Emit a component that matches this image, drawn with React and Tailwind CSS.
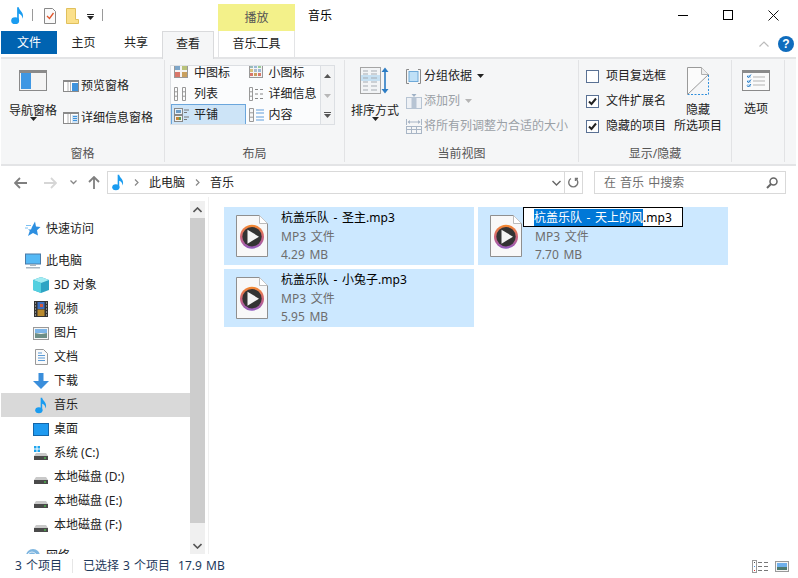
import React from 'react';

const Note = ({ className }) => (
    <svg viewBox="0 0 14 20" className={className}>
        <ellipse cx="4.5" cy="15.6" rx="4.3" ry="3.6" fill="#1a9cf0" />
        <path d="M6.6 1h1.8c.3 3 4.6 5 4.6 9.6 0 1-.2 2-.6 2.8.1-3-2.300-5-4-5.600V16H6.600z" fill="#1a9cf0" />
    </svg>
);

const Caret = ({ color = '#222', className = '' }) => (
    <svg viewBox="0 0 7 4" className={`w-[7px] h-[4px] ${className}`}>
        <path d="M0 0h7L3.500 4z" fill={color} />
    </svg>
);

const PaneIcon = ({ detail }) => (
    <svg viewBox="0 0 16 12" className="w-[16px] h-[12px]">
        <rect x=".5" y=".5" width="15" height="11" fill="#fff" stroke="#8a8a8a" />
        <rect x="1" y="1" width="14" height="1" fill="#8a8a8a" />
        <path d="M5 2v9M7.500 2v9" stroke="#b5b5b5" />
        <rect x="9" y="3" width="6" height="8" fill={detail ? '#cfe3f5' : '#3f93dc'} />
        {detail && <path d="M10 4.500h4M10 6.500h4M10 8.500h4" stroke="#3f93dc" />}
    </svg>
);

const NavPaneIcon = () => (
    <svg viewBox="0 0 28 21" className="w-[28px] h-[21px]">
        <rect x=".5" y=".5" width="27" height="20" fill="#f4f4f4" stroke="#8a8a8a" />
        <rect x="1" y="1" width="26" height="2" fill="#8a8a8a" />
        <rect x="2" y="3" width="10" height="16" fill="#3f97e3" />
    </svg>
);

const SortIcon = () => (
    <svg viewBox="0 0 30 27" className="w-[30px] h-[27px]">
        <rect x=".5" y=".5" width="20" height="26" fill="#f2f4f6" stroke="#a5a5a5" />
        <rect x="1" y="8" width="19" height="6" fill="#c6e0f2" />
        <path d="M3 4h5M11 4h6M3 7h5M11 7h6M3 11h5M11 11h6M3 15h5M11 15h6M3 19h5M11 19h6M3 23h5M11 23h6" stroke="#a5abb2" />
        <path d="M25 2v23" stroke="#2b7cc4" strokeWidth="1.600" />
        <path d="M21.500 5L25 .5 28.500 5zM21.500 22L25 26.500 28.500 22z" fill="#2b7cc4" />
    </svg>
);

const GroupIcon = () => (
    <svg viewBox="0 0 15 15" className="w-[15px] h-[15px]">
        <path d="M3 .5H.5v14H3M12 .5h2.500v14H12" fill="none" stroke="#8a8a8a" />
        <rect x="3" y="2.500" width="9" height="10" fill="#bfe0f7" stroke="#6ea9d8" />
    </svg>
);

const AddColIcon = () => (
    <svg viewBox="0 0 16 15" className="w-[16px] h-[15px]">
        <rect x=".5" y="3.500" width="15" height="11" fill="#eef1f5" stroke="#b7c4d3" />
        <rect x="5.500" y="3" width="5" height="12" fill="#b7c4d3" />
        <path d="M5.500 0h5L8 3z" fill="#9fb1c5" />
    </svg>
);

const FitIcon = () => (
    <svg viewBox="0 0 16 15" className="w-[16px] h-[15px]">
        <path d="M.5 0v6M15.500 0v6M2 3h12" stroke="#a9b6c6" />
        <path d="M4 1L1.500 3 4 5zM12 1l2.500 2L12 5z" fill="#a9b6c6" />
        <rect x=".5" y="7.500" width="15" height="7" fill="none" stroke="#a9b6c6" />
        <path d="M.5 10.500h15M5.500 8v7M10.500 8v7" stroke="#a9b6c6" />
    </svg>
);

const HideIcon = () => (
    <svg viewBox="0 0 22 28" className="w-[22px] h-[28px]">
        <path d="M.5 27.500V.5h14l7 7" fill="#fbfbfb" />
        <path d="M.5 27.500V.5h14l7 7" fill="none" stroke="#9a9a9a" />
        <path d="M14.500.5v7h7" fill="#eee" stroke="#b0b0b0" />
        <path d="M.5 27.500l21-20" stroke="#9a9a9a" />
        <path d="M21.500 8v19.500H1" fill="none" stroke="#2f8fdc" strokeDasharray="2 1.500" />
    </svg>
);

const OptionsIcon = () => (
    <svg viewBox="0 0 28 21" className="w-[28px] h-[21px]">
        <rect x=".5" y=".5" width="27" height="20" fill="#fafafa" stroke="#8a8a8a" />
        <rect x="1" y="1" width="26" height="2" fill="#8a8a8a" />
        <path d="M11 7h12M11 11h12M11 15h12" stroke="#b3b3b3" />
        <rect x="5" y="5" width="4" height="3" fill="#bcd9f2" />
        <rect x="5" y="10" width="4" height="3" fill="#bcd9f2" />
        <rect x="5" y="14" width="4" height="3" fill="#bcd9f2" />
        <path d="M5 6l1.500 1.500L9 4.500M5 11l1.500 1.500L9 9.500M5 15.500L6.500 17 9 14" fill="none" stroke="#2b7cc4" />
    </svg>
);

const GalleryIcon = ({ type }) => {
    if (type === 'medium' || type === 'small') {
        const cells = type === 'medium'
            ? [[1, 1, 5, '#7ea6c9'], [8, 1, 5, '#b9c27a'], [1, 8, 5, '#d9776a'], [8, 8, 5, '#c9a05f']]
            : [[1, 1, 3, '#9bb'], [5, 1, 3, '#9ab9d6'], [9, 1, 3, '#9c9'], [1, 5, 3, '#d6c07c'], [5, 5, 3, '#abc'], [9, 5, 3, '#9ab9d6'], [1, 9, 3, '#d9776a'], [5, 9, 3, '#c9a05f'], [9, 9, 3, '#d9776a']];
        return (
            <svg viewBox="0 0 14 14" className="w-[14px] h-[14px] -mt-[2px]">
                <rect x=".5" y=".5" width="13" height="13" fill="#f4f4f4" stroke="#999" />
                {cells.map(([x, y, s, c], i) => <rect key={i} x={x} y={y} width={s} height={s} fill={c} />)}
            </svg>
        );
    }
    if (type === 'list') {
        return (
            <svg viewBox="0 0 14 14" className="w-[14px] h-[14px]">
                <path d="M.5.5h3v13h-3zM.5 4.800h3M.5 9.200h3M8.500.5h3v13h-3zM8.500 4.800h3M8.500 9.200h3" fill="none" stroke="#999" />
            </svg>
        );
    }
    if (type === 'details') {
        return (
            <svg viewBox="0 0 15 14" className="w-[15px] h-[14px]">
                <path d="M.5.5h3v13h-3zM.5 4.800h3M.5 9.200h3" fill="none" stroke="#999" />
                <path d="M6 2.500h3M11 2.500h3M6 7h3M11 7h3M6 11.500h3M11 11.500h3" stroke="#888" />
            </svg>
        );
    }
    if (type === 'tiles') {
        return (
            <svg viewBox="0 0 15 14" className="w-[15px] h-[14px]">
                <rect x=".5" y=".5" width="8" height="6" fill="#e8f1f8" stroke="#888" />
                <rect x="2" y="2" width="5" height="3" fill="#6f9cc4" />
                <rect x=".5" y="7.500" width="8" height="6" fill="#f3f3f3" stroke="#888" />
                <rect x="2" y="9" width="3" height="3" fill="#c2863b" />
                <rect x="5" y="9" width="2" height="3" fill="#5e9e5a" />
                <path d="M10 2h5M10 4.500h3M10 9h5M10 11.500h3" stroke="#777" />
            </svg>
        );
    }
    return (
        <svg viewBox="0 0 15 14" className="w-[15px] h-[14px]">
            <path d="M.5.5h4v13h-4zM.5 4.800h4M.5 9.200h4" fill="#f6f6f6" stroke="#999" />
            <path d="M7 2h8M7 5h8M7 9h8M7 12h8" stroke="#5f9ddb" />
        </svg>
    );
};

const Mp3Icon = ({ id }) => (
    <svg viewBox="0 0 32 42" className="w-[32px] h-[42px] shrink-0">
        <defs>
            <linearGradient id={id} x1="0" y1="0" x2="0" y2="1">
                <stop offset="0" stopColor="#f58a2c" />
                <stop offset=".5" stopColor="#d0657a" />
                <stop offset="1" stopColor="#8f5bc0" />
            </linearGradient>
        </defs>
        <path d="M.5.5h23l8 8v33H.5z" fill="#f8f8f8" stroke="#8f8f8f" />
        <path d="M23.500.5v8h8" fill="#fff" stroke="#bbb" />
        <circle cx="16" cy="21.700" r="12" fill={`url(#${id})`} />
        <circle cx="16" cy="21.700" r="9.700" fill="#333" />
        <path d="M11.500 14.700l11.500 7-11.500 7z" fill="#f4f4f4" />
    </svg>
);

const Drive = ({ win }) => (
    <svg viewBox="0 0 16 16" className="w-[16px] h-[16px]">
        {win && <path d="M1 1h2.500v2.500H1zM4.500 1H7v2.500H4.500zM1 4.500h2.500V7H1zM4.500 4.500H7V7H4.500z" fill="#1fa5ee" />}
        <path d="M3 8h10l2 3H1z" fill="#c9c9c9" />
        <rect x="1" y="11" width="14" height="4" fill="#4a4a4a" />
        <rect x="11" y="12.500" width="2" height="1" fill="#4de34d" />
    </svg>
);

const navIcons = {
    star: (
        <svg viewBox="0 0 16 16" className="w-[16px] h-[16px]">
            <path d="M10 .5l1 5 4.500.5-3.500 3.200 1 5.300L8 12l-5 3 1.800-5.200L3 8.500h3L7 6z" fill="#2d8fe0" />
            <path d="M1 4.500h5M0 7h3" stroke="#7cc0f2" />
        </svg>
    ),
    pc: (
        <svg viewBox="0 0 16 16" className="w-[16px] h-[16px]">
            <rect x=".5" y="1" width="15" height="10" fill="#55b9f5" stroke="#4a7ba8" />
            <rect x="5" y="11" width="6" height="2" fill="#a9b7c2" />
            <rect x="1" y="14" width="14" height="1.500" fill="#a9b7c2" />
        </svg>
    ),
    cube: (
        <svg viewBox="0 0 16 16" className="w-[16px] h-[16px]">
            <path d="M8 0l8 3v10l-8 3-8-3V3z" fill="#2ea4c4" />
            <path d="M8 0l8 3-8 3-8-3z" fill="#a3ecf2" />
            <path d="M0 3l8 3v10l-8-3z" fill="#53d0e0" />
        </svg>
    ),
    video: (
        <svg viewBox="0 0 14 16" className="w-[14px] h-[16px]">
            <rect width="14" height="16" fill="#333" />
            <path d="M1 2h1M1 5h1M1 8h1M1 11h1M1 14h1M12 2h1M12 5h1M12 8h1M12 11h1M12 14h1" stroke="#ddd" />
            <rect x="3.500" y="1" width="7" height="7" fill="#3d6fc0" />
            <rect x="3.500" y="8.500" width="7" height="6.500" fill="#b98a2e" />
            <rect x="6" y="3" width="3" height="3" fill="#d05a40" />
        </svg>
    ),
    picture: (
        <svg viewBox="0 0 16 13" className="w-[16px] h-[13px]">
            <rect x=".5" y=".5" width="15" height="12" fill="#f6f6f6" stroke="#999" />
            <rect x="2" y="2" width="12" height="4" fill="#7db5e8" />
            <path d="M2 6l6 1 6-1v5H2z" fill="#6d8e86" />
        </svg>
    ),
    doc: (
        <svg viewBox="0 0 13 16" className="w-[13px] h-[16px]">
            <path d="M.5.5h8l4 4v11H.5z" fill="#fafafa" stroke="#999" />
            <path d="M3 4h4M3 6.500h7M3 9h7M3 11.500h7" stroke="#5c9bd6" />
        </svg>
    ),
    download: (
        <svg viewBox="0 0 16 16" className="w-[16px] h-[16px]">
            <path d="M5.500 0h5v8H16l-8 8-8-8h5.500z" fill="#3a8edb" />
        </svg>
    ),
    desktop: (
        <svg viewBox="0 0 16 13" className="w-[16px] h-[13px]">
            <rect x=".5" y=".5" width="15" height="12" fill="#1e9af0" stroke="#1465a8" />
        </svg>
    ),
    network: (
        <svg viewBox="0 0 16 16" className="w-[16px] h-[16px]">
            <circle cx="8" cy="8" r="7" fill="#7fb6e0" />
            <path d="M3 6c3-3 6-2 8 0M5 12c2-3 5-2 7-1" stroke="#e8f3fb" fill="none" />
        </svg>
    ),
};

const SmallBtn = ({ icon, label, caret, disabled }) => (
    <div className={`flex items-center h-[16px] ${disabled ? 'text-[#9aa0a6]' : 'text-[#222]'}`}>
        <span className="w-[18px] flex items-center shrink-0">{icon}</span>
        <span className="whitespace-nowrap leading-[16px]">{label}</span>
        {caret && <Caret color={disabled ? '#b5b5b5' : '#222'} className="ml-[5px]" />}
    </div>
);

const Check = ({ checked, label }) => (
    <div className="flex items-center h-[16px] text-[#222]">
        <span className="w-[13px] h-[13px] border border-[#5a7194] bg-white flex items-center justify-center shrink-0">
            {checked && (
                <svg viewBox="0 0 11 11" className="w-[11px] h-[11px]">
                    <path d="M2 5.500l2.500 2.500L9 2.500" fill="none" stroke="#222" strokeWidth="2" />
                </svg>
            )}
        </span>
        <span className="ml-[7px] whitespace-nowrap leading-[16px]">{label}</span>
    </div>
);

const Group = ({ w, label, children }) => (
    <div className={`${w} h-[102px] mt-[1px] border-r border-[#e2e3e5] flex flex-col shrink-0`}>
        <div className="h-[87px] flex items-start">{children}</div>
        <div className="h-[15px] leading-[14px] text-center text-[#555]">{label}</div>
    </div>
);

const GalleryCell = ({ type, label, h, selected, clip }) => (
    <div className={`flex ${clip ? 'items-start' : 'items-center'} ${h} overflow-hidden ${selected ? 'bg-[#cde4f7] border border-[#6ba6dc] pl-[2px]' : 'pl-[3px]'}`}>
        <span className="w-[20px] shrink-0 flex"><GalleryIcon type={type} /></span>
        <span className="whitespace-nowrap leading-[14px]">{label}</span>
    </div>
);

const Ribbon = () => (
    <div className="h-[109px] ml-[1px] mr-[2px] bg-[#f5f6f7] border-y-2 border-[#e3e4e6] flex shrink-0">
        <Group w="w-[164px]" label="窗格">
            <div className="w-[48px] ml-[8px] pt-[10px] flex flex-col items-center shrink-0">
                <NavPaneIcon />
                <span className="mt-[12px] leading-[16px] whitespace-nowrap text-[#222]">导航窗格</span>
                <Caret className="-mt-[2px]" />
            </div>
            <div className="ml-[6px] pt-[18px] flex flex-col gap-[16px]">
                <SmallBtn icon={<PaneIcon />} label="预览窗格" />
                <SmallBtn icon={<PaneIcon detail />} label="详细信息窗格" />
            </div>
        </Group>
        <Group w="w-[180px]" label="布局">
            <div className="mt-[5px] ml-[5px] w-[165px] h-[60px] border border-[#dcdfe3] bg-[#fbfcfd] flex text-[#222]">
                <div className="w-[149px] grid grid-cols-2 grid-rows-[17px_21px_20px] overflow-hidden">
                    <GalleryCell type="medium" label="中图标" h="h-[17px]" clip />
                    <GalleryCell type="small" label="小图标" h="h-[17px]" clip />
                    <GalleryCell type="list" label="列表" h="h-[21px]" />
                    <GalleryCell type="details" label="详细信息" h="h-[21px]" />
                    <GalleryCell type="tiles" label="平铺" h="h-[21px]" selected />
                    <GalleryCell type="content" label="内容" h="h-[21px]" />
                </div>
                <div className="w-[14px] border-l border-[#dcdfe3] bg-[#f3f4f5] flex flex-col items-center">
                    <div className="h-[20px] flex items-center"><svg viewBox="0 0 7 4" className="w-[7px] h-[4px]"><path d="M0 4h7L3.500 0z" fill="#555" /></svg></div>
                    <div className="h-[20px] flex items-center"><Caret color="#b8b8b8" /></div>
                    <div className="h-[18px] flex flex-col items-center justify-center gap-[1px]">
                        <span className="w-[7px] h-[1px] bg-[#555]" />
                        <Caret color="#555" />
                    </div>
                </div>
            </div>
        </Group>
        <Group w="w-[234px]" label="当前视图">
            <div className="w-[60px] pt-[7px] flex flex-col items-center shrink-0">
                <SortIcon />
                <span className="mt-[9px] leading-[16px] whitespace-nowrap text-[#222]">排序方式</span>
                <Caret className="-mt-[2px]" />
            </div>
            <div className="ml-[1px] pt-[8px] flex flex-col gap-[9px]">
                <SmallBtn icon={<GroupIcon />} label="分组依据" caret />
                <SmallBtn icon={<AddColIcon />} label="添加列" caret disabled />
                <SmallBtn icon={<FitIcon />} label="将所有列调整为合适的大小" disabled />
            </div>
        </Group>
        <Group w="w-[153px]" label="显示/隐藏">
            <div className="ml-[7px] pt-[8px] flex flex-col gap-[9px] shrink-0">
                <Check label="项目复选框" />
                <Check checked label="文件扩展名" />
                <Check checked label="隐藏的项目" />
            </div>
            <div className="ml-[8px] pt-[7px] flex flex-col items-center text-[#222]">
                <HideIcon />
                <span className="mt-[7px] leading-[16px]">隐藏</span>
                <span className="leading-[16px] whitespace-nowrap">所选项目</span>
            </div>
        </Group>
        <Group w="w-[53px]" label="">
            <div className="w-[48px] pt-[10px] flex flex-col items-center text-[#222]">
                <OptionsIcon />
                <span className="mt-[10px] leading-[16px]">选项</span>
            </div>
        </Group>
    </div>
);

const TitleBar = () => (
    <div className="h-[31px] flex shrink-0 text-black">
        <div className="pt-[6px] pl-[11px]"><Note className="w-[13px] h-[19px]" /></div>
        <span className="ml-[8px] mt-[9px] w-[1px] h-[12px] bg-[#9a9a9a]" />
        <svg viewBox="0 0 12 16" className="w-[12px] h-[16px] ml-[11px] mt-[8px]">
            <path d="M.5.5h8l3 3v12H.5z" fill="#fafafa" stroke="#888" />
            <path d="M3 8l2.500 2.500L9.500 5" fill="none" stroke="#e0552b" strokeWidth="1.300" />
        </svg>
        <svg viewBox="0 0 13 16" className="w-[13px] h-[16px] ml-[10px] mt-[8px]">
            <path d="M.5.500h9v11l3 0v4H.5z" fill="#fbe08a" stroke="#e0c05c" />
        </svg>
        <div className="ml-[8px] mt-[14px] flex flex-col items-center gap-[1px]">
            <span className="w-[7px] h-[1px] bg-[#222]" />
            <Caret />
        </div>
        <span className="ml-[8px] mt-[9px] w-[1px] h-[12px] bg-[#9a9a9a]" />
        <div className="ml-[115px] mt-[4px] w-[77px] h-[27px] bg-[#f3f18a] flex items-center justify-center text-[#555]">播放</div>
        <span className="ml-[13px] mt-[8px] leading-[16px]">音乐</span>
        <div className="ml-auto flex pr-[19px] pt-[10px]">
            <span className="w-[10px] h-[1px] bg-black mt-[5px]" />
            <span className="w-[10px] h-[10px] border border-black ml-[35px]" />
            <svg viewBox="0 0 11 11" className="w-[11px] h-[11px] ml-[35px]">
                <path d="M.5.5l10 10M10.500.5l-10 10" stroke="#111" />
            </svg>
        </div>
    </div>
);

const TabRow = () => (
    <div className="h-[26px] flex shrink-0 text-[#222] relative z-10">
        <div className="ml-[1px] w-[56px] h-[23px] bg-[#0063b1] text-white flex items-center justify-center">文件</div>
        <div className="w-[53px] h-[23px] flex items-center justify-center">主页</div>
        <div className="w-[52px] h-[23px] flex items-center justify-center">共享</div>
        <div className="w-[52px] h-[28px] bg-[#f5f6f7] border-x border-t border-[#d9dadc] flex items-start pt-[3px] justify-center">查看</div>
        <div className="ml-[4px] w-[77px] h-[26px] border-x border-[#e3e4e6] flex items-start pt-[4px] justify-center">音乐工具</div>
        <div className="ml-auto flex items-start">
            <svg viewBox="0 0 10 6" className="w-[10px] h-[6px] mt-[10px] mr-[9px]">
                <path d="M.5 5.500L5 1l4.500 4.500" fill="none" stroke="#bbb" strokeWidth="1.200" />
            </svg>
            <span className="w-[16px] h-[16px] mt-[5px] mr-[4px] rounded-full bg-[#0f6cbd] text-white font-bold text-[12px] leading-[16px] text-center font-['Liberation_Sans',sans-serif]">?</span>
        </div>
    </div>
);

const AddressBar = () => (
    <div className="h-[31px] pt-[5px] shrink-0 text-[#222]">
        <div className="h-[23px] flex items-center">
            <svg viewBox="0 0 13 12" className="w-[13px] h-[12px] ml-[14px]"><path d="M6 1L1 6l5 5M1 6h12" fill="none" stroke="#7f7f7f" strokeWidth="1.800" /></svg>
            <svg viewBox="0 0 13 12" className="w-[13px] h-[12px] ml-[17px]"><path d="M7 1l5 5-5 5M12 6H0" fill="none" stroke="#d6d6d6" strokeWidth="1.800" /></svg>
            <svg viewBox="0 0 7 5" className="w-[7px] h-[5px] ml-[13px]"><path d="M.5.500l3 3 3-3" fill="none" stroke="#888" strokeWidth="1.300" /></svg>
            <svg viewBox="0 0 12 13" className="w-[12px] h-[13px] ml-[11px]"><path d="M1 6l5-5 5 5M6 1v12" fill="none" stroke="#7f7f7f" strokeWidth="1.800" /></svg>
            <div className="ml-[7px] w-[476px] h-[23px] border border-[#d9d9d9] flex items-center">
                <Note className="w-[12px] h-[17px] ml-[4px]" />
                <svg viewBox="0 0 5 7" className="w-[5px] h-[7px] ml-[10px]"><path d="M1 .5l3 3-3 3" fill="none" stroke="#888" strokeWidth="1.200" /></svg>
                <span className="ml-[10px] leading-[16px]">此电脑</span>
                <svg viewBox="0 0 5 7" className="w-[5px] h-[7px] ml-[10px]"><path d="M1 .5l3 3-3 3" fill="none" stroke="#888" strokeWidth="1.200" /></svg>
                <span className="ml-[10px] leading-[16px]">音乐</span>
                <svg viewBox="0 0 9 6" className="w-[9px] h-[6px] ml-auto mr-[3px]"><path d="M.5 1L4.500 5l4-4" fill="none" stroke="#666" strokeWidth="1.400" /></svg>
                <div className="w-[18px] h-full border-l border-[#d9d9d9] flex items-center justify-center">
                    <svg viewBox="0 0 11 12" className="w-[11px] h-[12px]"><path d="M3 1.500a4.500 4.500 0 1 0 4.500 0M7.500 4V1.500h2.500" fill="none" stroke="#777" strokeWidth="1.400" /></svg>
                </div>
            </div>
            <div className="ml-[11px] w-[192px] h-[23px] border border-[#d9d9d9] flex items-center pl-[9px] pr-[7px] text-[#6d6d6d] [word-spacing:1px]">
                <span className="leading-[16px]">在 音乐 中搜索</span>
                <svg viewBox="0 0 12 12" className="w-[12px] h-[12px] ml-auto"><circle cx="7.500" cy="4.500" r="3.500" fill="none" stroke="#666" strokeWidth="1.500" /><path d="M5 7l-4 4" stroke="#666" strokeWidth="2" /></svg>
            </div>
        </div>
    </div>
);

const navRows = [
    { icon: 'pc', label: '此电脑', top: true },
    { icon: 'cube', label: '3D 对象' },
    { icon: 'video', label: '视频' },
    { icon: 'picture', label: '图片' },
    { icon: 'doc', label: '文档' },
    { icon: 'download', label: '下载' },
    { icon: 'music', label: '音乐', selected: true },
    { icon: 'desktop', label: '桌面' },
    { icon: 'c', label: '系统 (C:)' },
    { icon: 'drive', label: '本地磁盘 (D:)' },
    { icon: 'drive', label: '本地磁盘 (E:)' },
    { icon: 'drive', label: '本地磁盘 (F:)' },
];

const NavIcon = ({ name }) => {
    if (name === 'music') return <Note className="w-[12px] h-[17px]" />;
    if (name === 'c') return <Drive win />;
    if (name === 'drive') return <Drive />;
    return navIcons[name];
};

const NavRow = ({ row }) => (
    <div className={`h-[24px] ml-[1px] flex items-center shrink-0 ${row.top ? 'pl-[24px]' : 'pl-[32px]'} ${row.selected ? 'bg-[#d9d9d9]' : ''}`}>
        <span className="w-[16px] h-[16px] flex items-center justify-center shrink-0"><NavIcon name={row.icon} /></span>
        <span className="ml-[5px] whitespace-nowrap leading-[16px]">{row.label}</span>
    </div>
);

const NavPane = () => (
    <div className="w-[190px] shrink-0 pt-[20px] flex flex-col text-[#222] overflow-hidden">
        <NavRow row={{ icon: 'star', label: '快速访问', top: true }} />
        <div className="h-[8px] shrink-0" />
        {navRows.map((row) => <NavRow key={row.label} row={row} />)}
        <div className="h-[7px] shrink-0" />
        <NavRow row={{ icon: 'network', label: '网络', top: true }} />
    </div>
);

const ScrollBar = () => (
    <div className="w-[15px] mt-[4px] bg-[#f0f0f0] flex flex-col shrink-0 h-[353px]">
        <div className="h-[17px] flex items-center justify-center">
            <svg viewBox="0 0 9 6" className="w-[9px] h-[6px]"><path d="M.5 5L4.500 1l4 4" fill="none" stroke="#555" strokeWidth="1.600" /></svg>
        </div>
        <div className="h-[305px] bg-[#cdcdcd]" />
        <div className="mt-auto h-[17px] flex items-center justify-center">
            <svg viewBox="0 0 9 6" className="w-[9px] h-[6px]"><path d="M.5 1L4.500 5l4-4" fill="none" stroke="#555" strokeWidth="1.600" /></svg>
        </div>
    </div>
);

const FileTile = ({ id, name, size, rename }) => (
    <div className="relative h-[58px] bg-[#cce8ff] pl-[12px] pt-[8px] flex [word-spacing:1.500px]">
        <Mp3Icon id={id} />
        <div className="ml-[13px] -mt-[6px] flex flex-col leading-[18.500px] text-[#6d6d6d] whitespace-nowrap">
            <span className="text-black h-[18.500px]">{name}</span>
            <span>MP3 文件</span>
            <span>{size}</span>
        </div>
        {rename && (
            <div className="absolute left-[45px] top-0 w-[160px] h-[20px] bg-white border border-black flex items-center pl-[10px] text-black whitespace-nowrap leading-[17px]">
                <span className="bg-[#0078d7] text-white h-[17px]">{rename}</span>
                <span>.mp3</span>
            </div>
        )}
    </div>
);

const StatusBar = () => (
    <div className="h-[24px] flex items-center shrink-0 text-[#1e395b] [word-spacing:1px]">
        <span className="ml-[15px] w-[57px] leading-[16px] whitespace-nowrap">3 个项目</span>
        <span className="w-[1px] h-[14px] bg-[#e6e6e6]" />
        <span className="ml-[10px] leading-[16px] whitespace-nowrap">已选择 3 个项目</span>
        <span className="ml-[8px] leading-[16px] whitespace-nowrap">17.9 MB</span>
        <svg viewBox="0 0 16 13" className="w-[16px] h-[13px] ml-auto">
            <rect x=".5" y=".5" width="4" height="12" fill="#fff" stroke="#999" />
            <rect x="2" y="2" width="1" height="1" fill="#555" />
            <rect x="2" y="6" width="1" height="1" fill="#3d8fe0" />
            <rect x="2" y="10" width="1" height="1" fill="#e03030" />
            <path d="M6 2.500h4M12 2.500h4M6 6.500h4M12 6.500h4M6 10.500h4M12 10.500h4" stroke="#777" />
        </svg>
        <svg viewBox="0 0 14 11" className="w-[14px] h-[11px] ml-[7px] mr-[9px]">
            <rect x=".5" y=".5" width="13" height="10" fill="#f5f5f5" stroke="#999" />
            <rect x="2" y="2" width="10" height="4" fill="#6fb0ec" />
            <rect x="2" y="6" width="10" height="3" fill="#4d7a70" />
        </svg>
    </div>
);

export default function App() {
    return (
        <div className="w-[798px] h-[578px] overflow-hidden bg-white flex flex-col text-[12px] font-['Noto_Sans','Noto_Sans_CJK_SC',sans-serif]">
            <TitleBar />
            <TabRow />
            <Ribbon />
            <AddressBar />
            <div className="h-[357px] flex shrink-0 overflow-hidden">
                <NavPane />
                <ScrollBar />
                <div className="ml-[3px] flex-1 border-l border-[#f0f0f0] pl-[15px] pt-[10px]">
                    <div className="grid grid-cols-[250px_250px] gap-[4px]">
                        <FileTile id="a" name="杭盖乐队 - 圣主.mp3" size="4.29 MB" />
                        <FileTile id="b" name="" size="7.70 MB" rename="杭盖乐队 - 天上的风" />
                        <FileTile id="c" name="杭盖乐队 - 小兔子.mp3" size="5.95 MB" />
                    </div>
                </div>
            </div>
            <StatusBar />
        </div>
    );
}
